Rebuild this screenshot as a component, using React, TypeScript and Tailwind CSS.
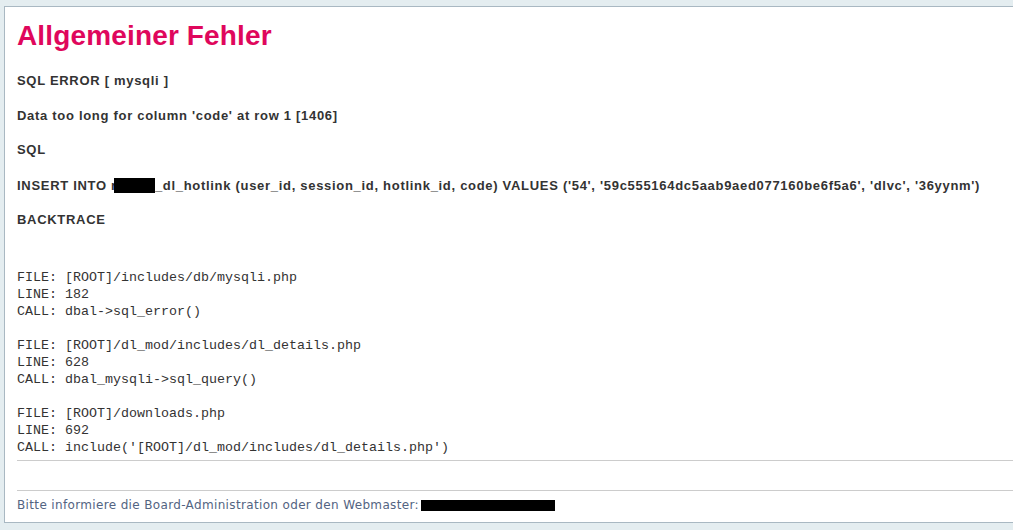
const backtrace = `FILE: [ROOT]/includes/db/mysqli.php
LINE: 182
CALL: dbal->sql_error()

FILE: [ROOT]/dl_mod/includes/dl_details.php
LINE: 628
CALL: dbal_mysqli->sql_query()

FILE: [ROOT]/downloads.php
LINE: 692
CALL: include('[ROOT]/dl_mod/includes/dl_details.php')`

export default function App() {
  return (
    <div className="min-h-[530px] overflow-hidden bg-[#E4EDF0] pl-[4px] pt-[6px]">
      <div className="border border-r-0 border-[#A9B8C2] bg-white pb-[10px] pl-[12px] pt-[14px]">
        <h1 className="font-['Liberation_Sans',Arial,sans-serif] text-[28px] font-bold leading-[29px] tracking-[0.15px] text-[#DF075C]">
          Allgemeiner Fehler
        </h1>
        <div className="mt-[24px] border-b border-[#CCCCCC] pb-[4px] font-['Liberation_Sans',Arial,sans-serif] text-[13px] font-bold leading-[14px] tracking-[0.7px] text-[#333333]">
          <p>SQL ERROR [ mysqli ]</p>
          <p className="mt-[20.5px]">Data too long for column 'code' at row 1 [1406]</p>
          <p className="mt-[20.5px]">SQL</p>
          <p className="mt-[20.5px] whitespace-nowrap">
            INSERT INTO r
            <span className="ml-[-3px] inline-block h-[15px] w-[41px] bg-black align-[-3px]" />
            _dl_hotlink (user_id, session_id, hotlink_id, code) VALUES ('54', '59c555164dc5aab9aed077160be6f5a6', 'dlvc', '36yynm')
          </p>
          <p className="mt-[20.5px]">BACKTRACE</p>
          <pre className="mt-[42px] font-['Liberation_Mono','Courier_New',monospace] text-[13.33px] font-normal leading-[17px] tracking-normal">
            {backtrace}
          </pre>
        </div>
        <div className="mt-[29px] border-t border-[#CCCCCC] pt-[7px] font-['DejaVu_Sans',Verdana,sans-serif] text-[12px] leading-[14px] tracking-[0.35px] text-[#536482]">
          Bitte informiere die Board-Administration oder den Webmaster:{' '}
          <span className="ml-[-2px] inline-block h-[11px] w-[134px] bg-black align-[-2px]" />
        </div>
      </div>
    </div>
  )
}
